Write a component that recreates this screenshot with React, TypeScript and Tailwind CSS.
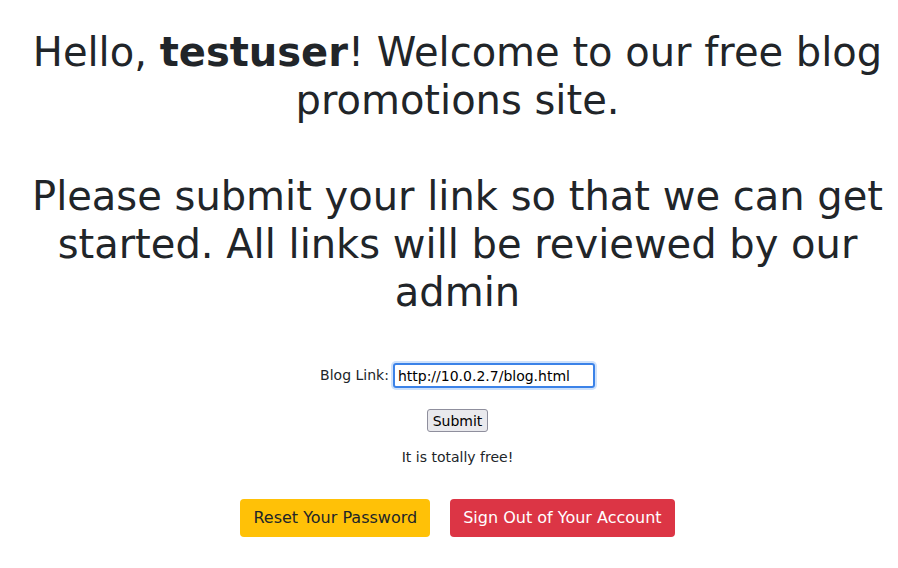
import React from "react";

const font = "font-['DejaVu_Sans',sans-serif]";

export default function App() {
  return (
    <div className={`min-h-[568px] bg-white text-[#212529] text-center ${font}`}>
      <div className="pl-[29px] pr-3 pt-[28px]">
        <h1 className="text-[40px] leading-[48px] font-normal">
          Hello, <b className="font-bold">testuser</b>! Welcome to our free blog promotions site.
          <br />
          <br />
          Please submit your link so that we can get started. All links will be reviewed by our admin
        </h1>

        <form className="mt-[47px] text-[14px]" onSubmit={(e) => e.preventDefault()}>
          <div className="flex items-center justify-center gap-[4px]">
            <label htmlFor="link">Blog Link:</label>
            <input
              id="link"
              defaultValue="http://10.0.2.7/blog.html"
              className="w-[202px] h-[25px] px-[3px] border-2 border-[#3b82e8] rounded-[3px] outline-none ring-2 ring-[#cfe2fb] text-[14px] text-black"
            />
          </div>
          <div className="mt-[21px]">
            <button
              type="submit"
              className="h-[23px] px-[5px] bg-[#e9e9ed] border border-[#8f8f9d] rounded-[3px] text-[14px] leading-none text-black"
            >
              Submit
            </button>
          </div>
          <p className="mt-[15px]">It is totally free!</p>
        </form>

        <div className="mt-[31px] flex justify-center gap-[20px]">
          <button className="h-[38px] px-[13px] bg-[#ffc107] text-[#212529] rounded-[4px] text-[16px]">
            Reset Your Password
          </button>
          <button className="h-[38px] px-[13px] bg-[#dc3545] text-white rounded-[4px] text-[16px]">
            Sign Out of Your Account
          </button>
        </div>
      </div>
    </div>
  );
}
